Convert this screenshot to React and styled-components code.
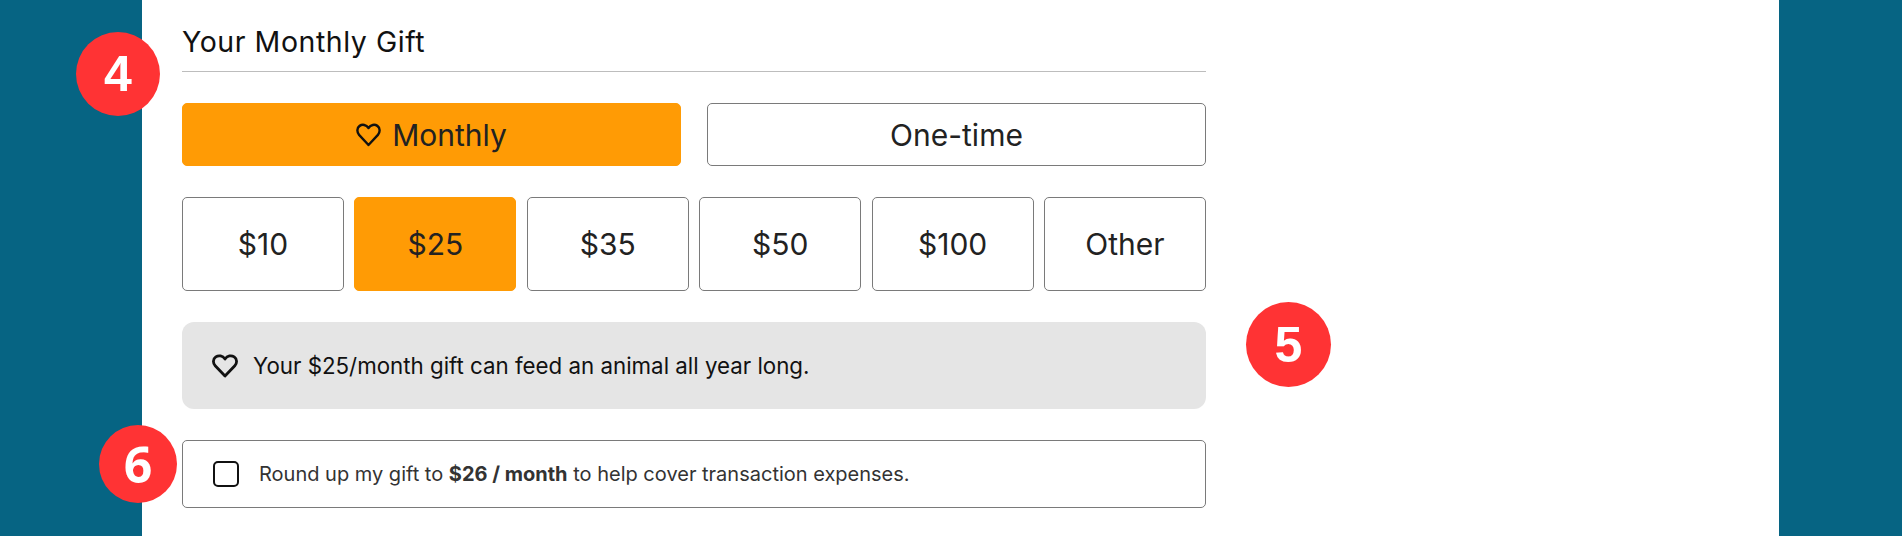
import React from "react";
import styled, { createGlobalStyle } from "styled-components";

const GlobalStyle = createGlobalStyle`
    html, body {
        margin: 0;
        padding: 0;
        background: #ffffff;
    }
    body {
        font-family: "Inter", "Noto Sans", sans-serif;
        color: #1a1a1a;
    }
`;

const HeartIcon = ({ width, height, stroke }) => (
    <svg width={width} height={height} viewBox="0 0 26 24" preserveAspectRatio="none" fill="none" stroke="currentColor" strokeWidth={stroke} strokeLinejoin="round" aria-hidden="true">
        <path d="M13 22 L3.2 11.8 C0.6 9 1 4.8 3.8 2.9 C6.6 1 10.6 1.6 13 5 C15.4 1.6 19.4 1 22.2 2.9 C25 4.8 25.4 9 22.8 11.8 Z" />
    </svg>
);

const amounts = ["$10", "$25", "$35", "$50", "$100", "Other"];

const App = () => {
    return (
        <>
            <GlobalStyle />
            <StyledPage>
                <StyledMain>
                    <StyledForm>
                        <StyledHeading>Your Monthly Gift</StyledHeading>
                        <StyledFrequency>
                            <StyledChoice $active>
                                <HeartIcon width={25} height={24} stroke={2.5} />
                                Monthly
                            </StyledChoice>
                            <StyledChoice>One-time</StyledChoice>
                        </StyledFrequency>
                        <StyledAmounts>
                            {amounts.map((amount) => (
                                <StyledChoice key={amount} $active={amount === "$25"}>
                                    {amount}
                                </StyledChoice>
                            ))}
                        </StyledAmounts>
                        <StyledInfo>
                            <HeartIcon width={26} height={24} stroke={2.8} />
                            <span>Your $25/month gift can feed an animal all year long.</span>
                        </StyledInfo>
                        <StyledRoundUp>
                            <StyledCheckbox />
                            <span>
                                Round up my gift to <strong>$26 / month</strong> to help cover transaction expenses.
                            </span>
                        </StyledRoundUp>
                    </StyledForm>
                </StyledMain>
                <StyledBadge $x="76px" $y="32px" $size="84px" $font="Liberation Sans">4</StyledBadge>
                <StyledBadge $x="1246px" $y="302px" $size="85px" $font="Liberation Sans">5</StyledBadge>
                <StyledBadge $x="99px" $y="425px" $size="78px" $font="Open Sans">6</StyledBadge>
            </StyledPage>
        </>
    );
};

const StyledPage = styled.div`
    position: relative;
    height: 536px;
    overflow: hidden;
    background: #066483;
    padding: 0 123px 0 142px;
    box-sizing: border-box;
`;
const StyledMain = styled.main`
    height: 100%;
    background: #ffffff;
    padding-left: 40px;
`;
const StyledForm = styled.div`
    width: 1024px;
    display: flex;
    flex-direction: column;
    gap: 31px;
`;
const StyledHeading = styled.h2`
    margin: 0;
    height: 72px;
    box-sizing: border-box;
    border-bottom: 1.5px solid #bdbdbd;
    padding-bottom: 12px;
    display: flex;
    align-items: flex-end;
    font-size: 28.5px;
    font-weight: 400;
    letter-spacing: 0.55px;
    color: #111111;
`;
const StyledFrequency = styled.div`
    display: grid;
    grid-template-columns: 1fr 1fr;
    gap: 26px;
    height: 63px;
`;
const StyledAmounts = styled.div`
    display: grid;
    grid-template-columns: repeat(6, 1fr);
    gap: 10.4px;
    height: 94px;
`;
const StyledChoice = styled.button`
    display: flex;
    align-items: center;
    justify-content: center;
    gap: 11px;
    box-sizing: border-box;
    padding: 0;
    font-family: inherit;
    font-size: 30px;
    font-weight: 400;
    color: #222222;
    background: ${(p) => (p.$active ? "#ff9b05" : "#ffffff")};
    border: 1.5px solid ${(p) => (p.$active ? "#ff9b05" : "#7a7a7a")};
    border-radius: 5px;
    svg {
        color: #111111;
    }
`;
const StyledInfo = styled.div`
    display: flex;
    align-items: center;
    gap: 15px;
    height: 87px;
    box-sizing: border-box;
    padding-left: 30px;
    background: #e5e5e5;
    border-radius: 12px;
    font-size: 22.3px;
    color: #111111;
`;
const StyledRoundUp = styled.div`
    display: flex;
    align-items: center;
    gap: 20px;
    height: 68px;
    box-sizing: border-box;
    padding-left: 30px;
    border: 1.5px solid #7a7a7a;
    border-radius: 5px;
    font-size: 20px;
    color: #333333;
    strong {
        font-weight: 700;
    }
`;
const StyledCheckbox = styled.span`
    width: 26px;
    height: 26px;
    box-sizing: border-box;
    border: 2px solid #111111;
    border-radius: 5px;
    background: #ffffff;
`;
// numbered callouts sit on top of the form
const StyledBadge = styled.div`
    position: absolute;
    left: ${(p) => p.$x};
    top: ${(p) => p.$y};
    width: ${(p) => p.$size};
    height: ${(p) => p.$size};
    display: flex;
    align-items: center;
    justify-content: center;
    border-radius: 50%;
    background: #ff3334;
    color: #ffffff;
    font-family: "${(p) => p.$font}", sans-serif;
    font-size: 50px;
    font-weight: 700;
`;

export default App;
